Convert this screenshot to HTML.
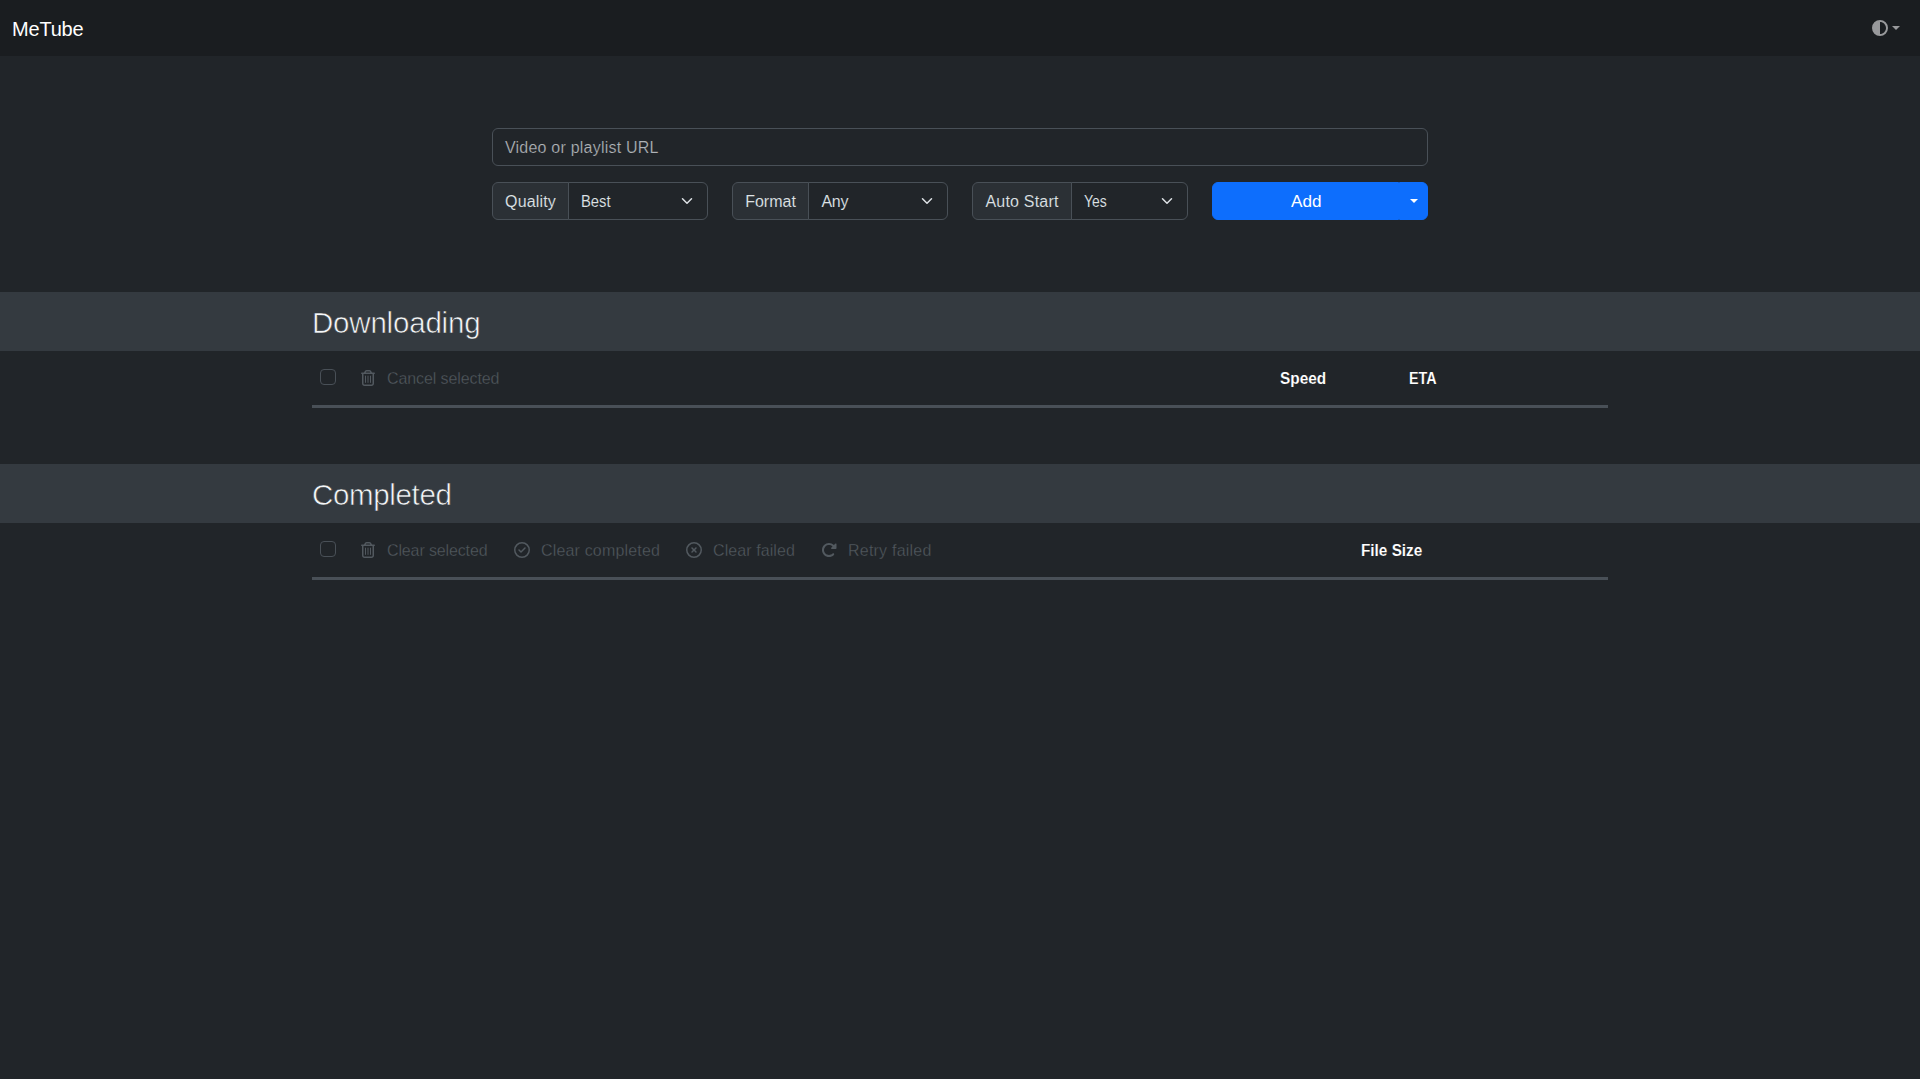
<!DOCTYPE html>
<html lang="en">
<head>
<meta charset="utf-8">
<title>MeTube</title>
<meta name="viewport" content="width=device-width, initial-scale=1">
<style>
*,*::before,*::after{box-sizing:border-box}
html,body{margin:0;padding:0}
body{
  width:1920px;height:1079px;overflow:hidden;position:relative;
  background:#212529;color:#dee2e6;
  font-family:"Liberation Sans",sans-serif;
  font-size:16px;line-height:24px;
  -webkit-text-size-adjust:100%;
}
svg{display:block}
button,input,select{font:inherit;margin:0;color:inherit;outline:0}
button{cursor:pointer}
h2{margin:0;font-weight:400}

/* ---------- navbar ---------- */
.navbar{
  position:absolute;left:0;top:0;width:1920px;height:56px;
  background:#1a1d20;
}
.navbar-brand{
  position:absolute;left:12px;top:14px;letter-spacing:-0.2px;height:30px;line-height:30px;
  font-size:20px;color:#fff;text-decoration:none;white-space:nowrap;
}
.theme-toggle{
  position:absolute;left:1864px;top:8px;width:44px;height:40px;padding:0;
  color:#98999b;background:transparent;border:0;
}
.theme-toggle svg{position:absolute;left:8px;top:12px;width:16px;height:16px;fill:currentColor}
.theme-toggle .caret{
  position:absolute;left:28px;top:18px;width:0;height:0;
  border-top:4.5px solid currentColor;border-left:4px solid transparent;border-right:4px solid transparent;
}

/* ---------- add url box ---------- */
.add-url-box{position:absolute;left:480px;top:120px;width:960px;padding:0 12px;margin:0}
.url-input{
  display:block;margin-top:8px;width:936px;height:38px;
  border:1px solid #495057;border-radius:6px;background:#212529;
  padding:7px 12px 5px;font-size:16px;line-height:24px;color:#dee2e6;
  letter-spacing:0.215px;white-space:nowrap;overflow:hidden;
}
.url-input .placeholder{color:#afb3b7;-webkit-text-stroke:0.2px #212529}
.opts{display:flex;gap:24px;margin-top:16px}
.input-group{display:flex;width:216px;height:38px}
.input-group-text{
  flex:none;height:38px;padding:7px 0 5px;
  border:1px solid #495057;border-radius:6px 0 0 6px;
  background:#2b3035;color:#dee2e6;white-space:nowrap;text-align:center;-webkit-text-stroke:0.1px #2b3035;
}
.form-select{
  flex:1 1 auto;height:38px;margin-left:-1px;
  border:1px solid #495057;border-radius:0 6px 6px 0;background:#212529;
  padding:7px 36px 5px 12px;color:#dee2e6;position:relative;white-space:nowrap;-webkit-text-stroke:0.1px #212529;
}
.form-select svg{position:absolute;right:12px;top:12px;width:16px;height:12px}
.sx{display:inline-block;transform-origin:0 50%}
.btn-group{display:flex;width:216px;height:38px}
.btn-primary{
  background:#0d6efd;color:#fff;border:1px solid #0d6efd;height:38px;
  padding:7px 12px 5px;text-align:center;font-size:16px;line-height:24px;
}
.btn-add{flex:1 1 auto;border-radius:6px 0 0 6px}
.btn-add span{display:inline-block;transform:scaleX(1.07);margin-left:1px}
.btn-split{flex:none;width:29px;border-radius:0 6px 6px 0;padding:0;position:relative}
.btn-split i{
  position:absolute;left:10px;top:16px;width:0;height:0;
  border-top:4.5px solid #fff;border-left:4.5px solid transparent;border-right:4.5px solid transparent;
}

/* ---------- sections ---------- */
.section-header{
  position:absolute;left:0;width:1920px;height:59px;background:#343a40;
}
.section-header h2{
  position:absolute;left:312px;top:8.5px;height:43px;line-height:43px;
  font-size:29.5px;color:#f4f6f8;white-space:nowrap;
  -webkit-text-stroke:0.6px #343a40;
}
.thead{
  position:absolute;left:312px;width:1296px;height:57px;
  border-bottom:3px solid #495057;
}
.thead .chk{
  position:absolute;left:8px;top:18px;width:16px;height:16px;margin:0;
  appearance:none;-webkit-appearance:none;
  border:1px solid #495057;border-radius:4px;background:#212529;
}
.thead .lnk{
  position:absolute;top:16px;height:24px;line-height:24px;color:#52595f;white-space:nowrap;
  background:transparent;border:0;padding:0;text-align:left;
  -webkit-text-stroke:0.3px #212529;
}
.thead .ico{position:absolute;top:19px;fill:#52595f}
.thead .th{
  position:absolute;top:16px;height:24px;line-height:24px;color:#fff;transform-origin:0 50%;
  -webkit-text-stroke:0.12px #212529;font-weight:700;white-space:nowrap;
}
</style>
</head>
<body>

<nav class="navbar">
  <a class="navbar-brand">MeTube</a>
  <button type="button" class="theme-toggle" aria-label="Toggle theme">
    <svg viewBox="0 0 512 512" aria-hidden="true"><path d="M448 256c0-106-86-192-192-192V448c106 0 192-86 192-192zM0 256a256 256 0 1 1 512 0A256 256 0 1 1 0 256z"/></svg>
    <span class="caret"></span>
  </button>
</nav>

<main>
<form class="add-url-box" onsubmit="return false">
  <div class="url-input" role="textbox" aria-label="Video or playlist URL"><span class="placeholder">Video or playlist URL</span></div>
  <div class="opts">
    <div class="input-group">
      <span class="input-group-text" style="width:77px;letter-spacing:0.15px">Quality</span>
      <div class="form-select" role="combobox" aria-label="Quality"><span class="sx" style="transform:scaleX(.925)">Best</span><svg viewBox="0 0 16 16" aria-hidden="true"><path fill="none" stroke="#dee2e6" stroke-linecap="round" stroke-linejoin="round" stroke-width="2" d="m2 5 6 6 6-6"/></svg></div>
    </div>
    <div class="input-group">
      <span class="input-group-text" style="width:77px">Format</span>
      <div class="form-select" role="combobox" aria-label="Format"><span class="sx" style="letter-spacing:-0.3px;margin-left:.5px">Any</span><svg viewBox="0 0 16 16" aria-hidden="true"><path fill="none" stroke="#dee2e6" stroke-linecap="round" stroke-linejoin="round" stroke-width="2" d="m2 5 6 6 6-6"/></svg></div>
    </div>
    <div class="input-group">
      <span class="input-group-text" style="width:100px;letter-spacing:0.2px">Auto Start</span>
      <div class="form-select" role="combobox" aria-label="Auto Start"><span class="sx" style="transform:scaleX(.873)">Yes</span><svg viewBox="0 0 16 16" aria-hidden="true"><path fill="none" stroke="#dee2e6" stroke-linecap="round" stroke-linejoin="round" stroke-width="2" d="m2 5 6 6 6-6"/></svg></div>
    </div>
    <div class="btn-group">
      <button type="submit" class="btn-primary btn-add"><span>Add</span></button>
      <button type="button" class="btn-primary btn-split" aria-label="Advanced options"><i></i></button>
    </div>
  </div>
</form>

<section>
  <div class="section-header" style="top:292px"><h2 style="letter-spacing:-0.2px">Downloading</h2></div>
  <div class="thead" style="top:351px">
    <input type="checkbox" class="chk" aria-label="Select all downloading">
    <svg class="ico" style="left:49px;width:14px;height:16px" viewBox="0 0 448 512" aria-hidden="true"><path d="M170.500 51.600L151.500 80h145l-19-28.400c-1.500-2.200-4-3.600-6.700-3.600H177.100c-2.700 0-5.200 1.300-6.700 3.600zm147-26.600L354.200 80H368h48 8c13.300 0 24 10.700 24 24s-10.700 24-24 24h-8V432c0 44.200-35.800 80-80 80H112c-44.200 0-80-35.800-80-80V128H24c-13.300 0-24-10.700-24-24S10.700 80 24 80h8H80 93.800l36.700-55.100C140.900 9.400 158.400 0 177.100 0h93.700c18.700 0 36.200 9.400 46.600 24.900zM80 128V432c0 17.700 14.300 32 32 32H336c17.700 0 32-14.300 32-32V128H80zm80 64V400c0 8.800-7.200 16-16 16s-16-7.200-16-16V192c0-8.800 7.200-16 16-16s16 7.200 16 16zm80 0V400c0 8.800-7.200 16-16 16s-16-7.200-16-16V192c0-8.800 7.200-16 16-16s16 7.200 16 16zm80 0V400c0 8.800-7.200 16-16 16s-16-7.200-16-16V192c0-8.800 7.200-16 16-16s16 7.200 16 16z"/></svg>
    <button type="button" class="lnk" disabled style="left:75px;letter-spacing:-0.1px">Cancel selected</button>
    <span class="th" style="left:968px;transform:scaleX(.96)">Speed</span>
    <span class="th" style="left:1096.5px;transform:scaleX(.894)">ETA</span>
  </div>
</section>

<section>
  <div class="section-header" style="top:464px"><h2 style="letter-spacing:-0.35px">Completed</h2></div>
  <div class="thead" style="top:523px">
    <input type="checkbox" class="chk" aria-label="Select all completed">
    <svg class="ico" style="left:49px;width:14px;height:16px" viewBox="0 0 448 512" aria-hidden="true"><path d="M170.500 51.600L151.500 80h145l-19-28.400c-1.500-2.200-4-3.600-6.700-3.600H177.100c-2.700 0-5.200 1.300-6.700 3.600zm147-26.600L354.200 80H368h48 8c13.300 0 24 10.700 24 24s-10.700 24-24 24h-8V432c0 44.200-35.800 80-80 80H112c-44.200 0-80-35.800-80-80V128H24c-13.300 0-24-10.700-24-24S10.700 80 24 80h8H80 93.800l36.700-55.100C140.900 9.400 158.400 0 177.100 0h93.700c18.700 0 36.200 9.400 46.600 24.900zM80 128V432c0 17.700 14.300 32 32 32H336c17.700 0 32-14.300 32-32V128H80zm80 64V400c0 8.800-7.200 16-16 16s-16-7.200-16-16V192c0-8.800 7.200-16 16-16s16 7.200 16 16zm80 0V400c0 8.800-7.200 16-16 16s-16-7.200-16-16V192c0-8.800 7.200-16 16-16s16 7.200 16 16zm80 0V400c0 8.800-7.200 16-16 16s-16-7.200-16-16V192c0-8.800 7.200-16 16-16s16 7.200 16 16z"/></svg>
    <button type="button" class="lnk" disabled style="left:75px;letter-spacing:-0.13px">Clear selected</button>
    <svg class="ico" style="left:202px;width:16px;height:16px" viewBox="0 0 512 512" aria-hidden="true"><path d="M256 48a208 208 0 1 1 0 416 208 208 0 1 1 0-416zm0 464A256 256 0 1 0 256 0a256 256 0 1 0 0 512zM369 209c9.400-9.400 9.400-24.600 0-33.900s-24.600-9.400-33.900 0l-111 111-47-47c-9.400-9.400-24.600-9.400-33.900 0s-9.400 24.600 0 33.900l64 64c9.400 9.400 24.600 9.400 33.900 0L369 209z"/></svg>
    <button type="button" class="lnk" disabled style="left:229px;letter-spacing:0.17px">Clear completed</button>
    <svg class="ico" style="left:374px;width:16px;height:16px" viewBox="0 0 512 512" aria-hidden="true"><path d="M256 48a208 208 0 1 1 0 416 208 208 0 1 1 0-416zm0 464A256 256 0 1 0 256 0a256 256 0 1 0 0 512zM175 175c-9.400 9.400-9.400 24.600 0 33.900l47 47-47 47c-9.400 9.400-9.400 24.600 0 33.900s24.600 9.400 33.900 0l47-47 47 47c9.400 9.400 24.600 9.400 33.900 0s9.400-24.600 0-33.900l-47-47 47-47c9.400-9.400 9.400-24.600 0-33.900s-24.600-9.400-33.900 0l-47 47-47-47c-9.400-9.400-24.600-9.400-33.900 0z"/></svg>
    <button type="button" class="lnk" disabled style="left:401px;letter-spacing:0.08px">Clear failed</button>
    <svg class="ico" style="left:509px;width:16px;height:16px" viewBox="0 0 512 512" aria-hidden="true"><path d="M463.500 224H472c13.300 0 24-10.700 24-24V72c0-9.700-5.800-18.500-14.800-22.200s-19.300-1.700-26.200 5.200L413.400 96.600c-87.600-86.500-228.700-86.200-315.800 1c-87.500 87.500-87.500 229.300 0 316.800s229.300 87.500 316.800 0c12.500-12.500 12.500-32.800 0-45.300s-32.800-12.500-45.300 0c-62.500 62.500-163.800 62.500-226.300 0s-62.500-163.800 0-226.300c62.200-62.200 162.700-62.500 225.300-1L327 183c-6.900 6.900-8.900 17.200-5.200 26.200s12.500 14.800 22.200 14.800H463.500z"/></svg>
    <button type="button" class="lnk" disabled style="left:536px;letter-spacing:0.22px">Retry failed</button>
    <span class="th" style="left:1049px;transform:scaleX(.957)">File Size</span>
  </div>
</section>
</main>

</body>
</html>
